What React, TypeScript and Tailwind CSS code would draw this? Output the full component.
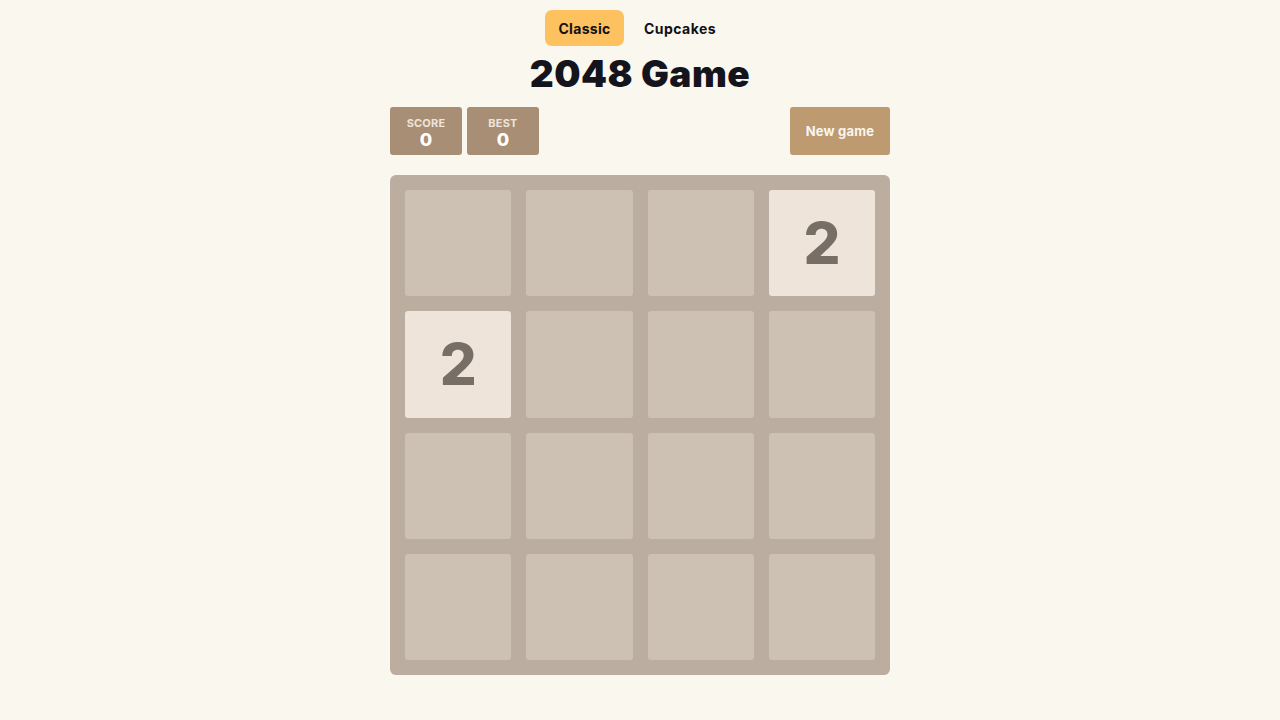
import React from "react";

const board: number[][] = [
  [0, 0, 0, 2],
  [2, 0, 0, 0],
  [0, 0, 0, 0],
  [0, 0, 0, 0],
];

function Tile({ value }: { value: number }) {
  if (!value) {
    return <div className="aspect-square rounded-[3px] bg-[#cdc1b4]" />;
  }
  return (
    <div className="flex aspect-square items-center justify-center rounded-[3px] bg-[#eee4da] text-[58px] font-extrabold text-[#776e65]">
      {value}
    </div>
  );
}

function ScoreBox({ label, value }: { label: string; value: number }) {
  return (
    <div className="flex h-[48px] w-[72px] flex-col items-center justify-center rounded-[3px] bg-[#a88e74] pt-[5px]">
      <span className="text-[11px] font-bold leading-[13px] tracking-[0.2px] text-[#eee4da]">{label}</span>
      <span className="text-[18px] font-extrabold leading-[20px] text-white">{value}</span>
    </div>
  );
}

export default function App() {
  return (
    <div
      className="min-h-[720px] bg-[#faf7ee]"
      style={{ fontFamily: "Inter, 'Noto Sans', sans-serif" }}
    >
      <div className="flex justify-center gap-[5px] pt-[10px]">
        <button className="h-[36px] w-[79px] rounded-[7px] bg-[#fec160] text-[14px] font-bold tracking-[0.3px] text-[#111114]">
          Classic
        </button>
        <button className="h-[36px] rounded-[7px] pl-[15px] pr-[19px] text-[14px] font-bold tracking-[0.45px] text-[#111114]">
          Cupcakes
        </button>
      </div>
      <h1 className="mt-[6px] text-center text-[37px] font-black leading-[44px] tracking-[0.5px] text-[#14141c]">
        2048 Game
      </h1>
      <div className="mx-auto mt-[11px] w-[500px]">
        <div className="flex items-center justify-between">
          <div className="flex gap-[5px]">
            <ScoreBox label="SCORE" value={0} />
            <ScoreBox label="BEST" value={0} />
          </div>
          <button className="h-[48px] w-[100px] rounded-[3px] bg-[#bd9a70] pt-[2px] text-[13px] font-bold tracking-[0.2px] text-[#f9f6f2]">
            New game
          </button>
        </div>
        <div className="mt-[20px] grid grid-cols-4 gap-[15px] rounded-[6px] bg-[#bbada0] p-[15px]">
          {board.flat().map((v, i) => (
            <Tile key={i} value={v} />
          ))}
        </div>
      </div>
    </div>
  );
}
